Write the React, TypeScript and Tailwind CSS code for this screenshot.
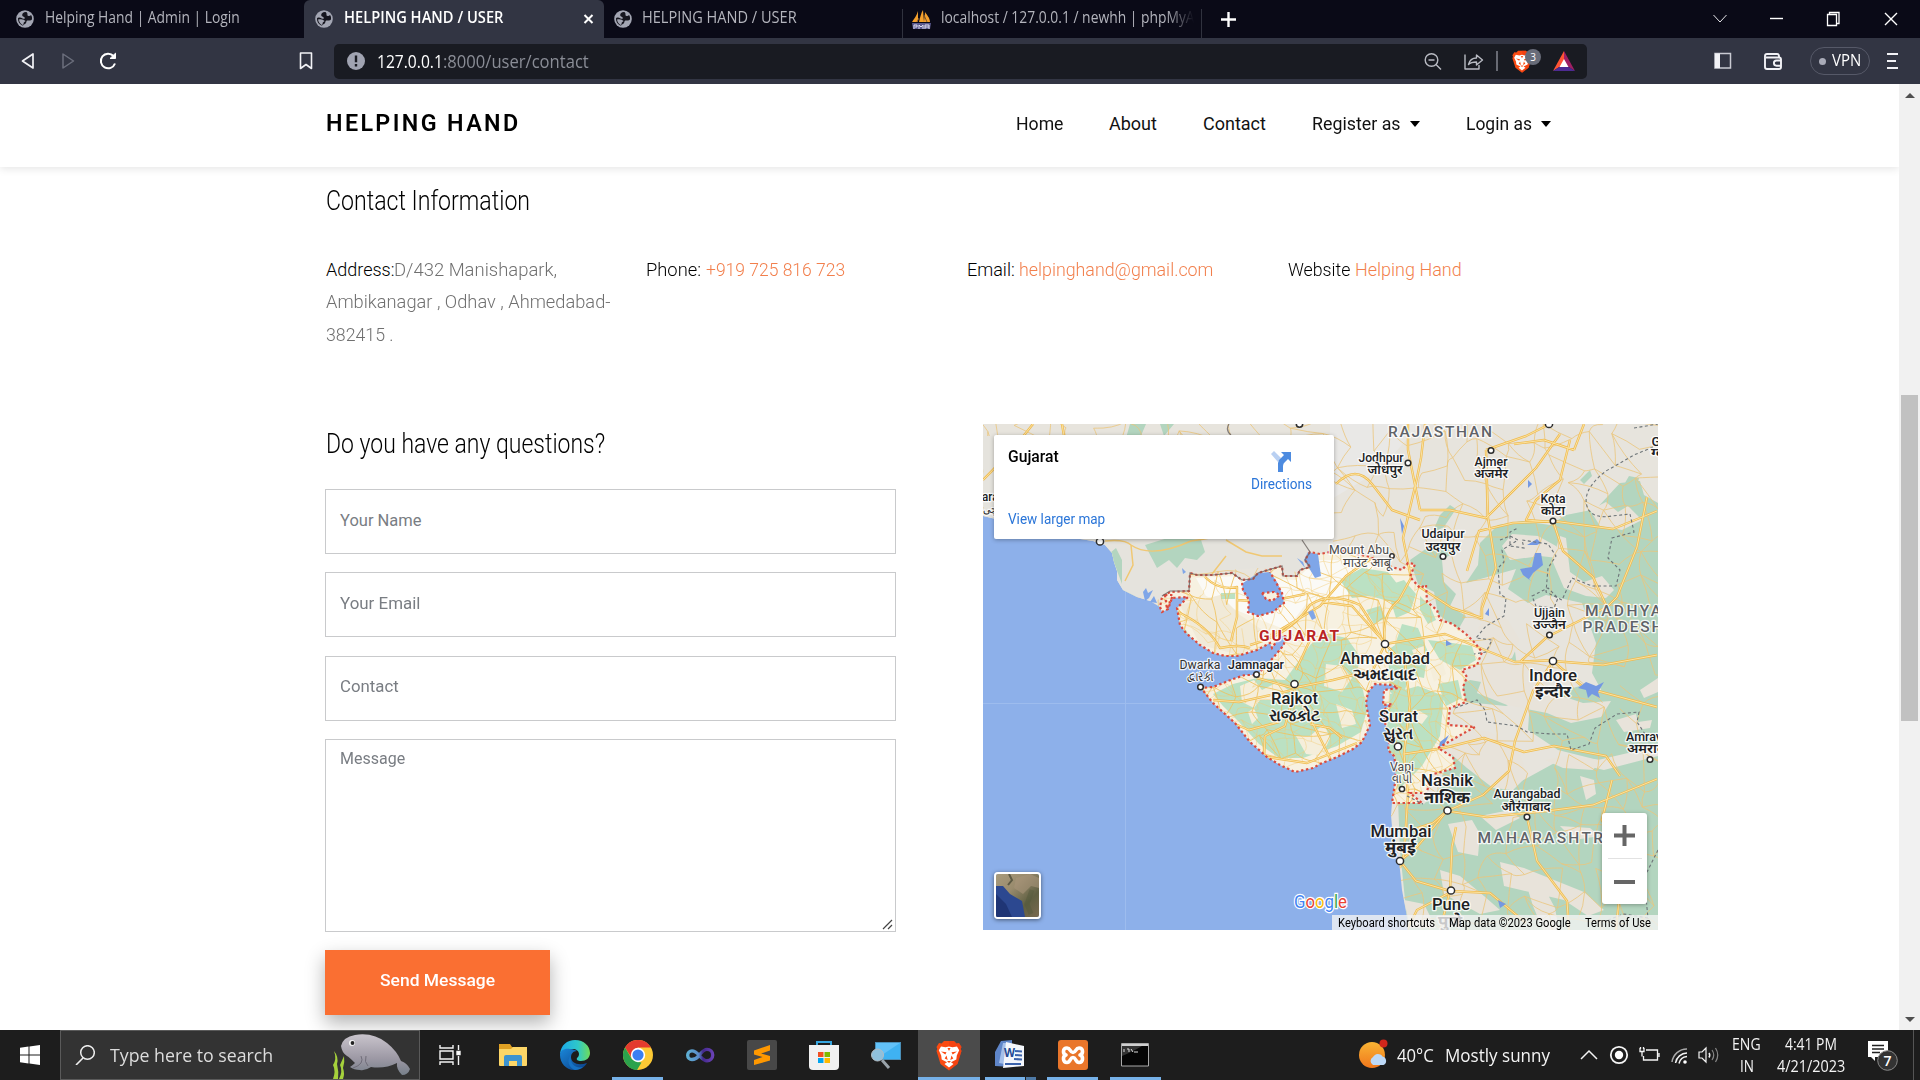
import React, { useLayoutEffect, useRef, useState } from 'react';

/* A run of text that is stretched or condensed to a given width. */
function Fit({ w, className = '', children }: { w: number; className?: string; children: React.ReactNode }) {
  const ref = useRef<HTMLSpanElement>(null);
  const [k, setK] = useState(1);
  useLayoutEffect(() => {
    if (ref.current && ref.current.offsetWidth) setK(w / ref.current.offsetWidth);
  }, [w]);
  return (
    <span className={`inline-block shrink-0 whitespace-nowrap ${className}`} style={{ width: w }}>
      <span ref={ref} className="inline-block origin-left" style={{ transform: `scaleX(${k})` }}>
        {children}
      </span>
    </span>
  );
}

const Globe = () => (
  <svg width="18" height="18" viewBox="0 0 18 18" className="shrink-0">
    <circle cx="9" cy="9" r="8.8" fill="#a3a6b3" />
    <path d="M10.5 2C8 1.600 6 3.400 6.200 5.200 6.400 7 9 6.400 8.800 8.200c-.2 1.400-2.400.2-3.800-.4C4 7.400 2.600 7 2 8.200c-.2 3 1.400 5.800 3.800 7 1.800.8 2-.8 3.400-1.400 1.800-.6.6-2.600 2.200-3.200 1.600-.6 3.200.4 4.400-.8.6-1.600.2-3.400-.8-4.800-.8.8-1.600 1.400-3 .8-1.200-.6.4-2-1.500-3.800z" fill="#16161f" />
    <path d="M3 9.500c3-.8 5.400.2 6.600 1.600l-1.800 1.300-.6 2.800C5 14.500 3.200 12 3 9.500z" fill="#a3a6b3" />
  </svg>
);

function BraveLion({ w, h }: { w: number; h: number }) {
  return (
    <svg width={w} height={h} viewBox="0 0 26 31" preserveAspectRatio="none" className="shrink-0">
      <path d="M8 1h10l2.500 2.500L23 3l2.500 4-.8 2 .8 2-4 13-8.500 6.500L4.500 24l-4-13 .8-2-.8-2L3 3l2.500.5z" fill="#fb4b12" />
      <path d="M13 1h5l2.500 2.500L23 3l2.500 4-.8 2 .8 2-4 13-8.500 6.500z" fill="#f03a10" opacity=".5" />
      <path d="M5 6.500l4.500.8L13 6.500l3.500.8L21 6.500l2.200 3.800-2.400 5.200-.5 4-5.300 2.700L17.500 24 13 27.500 8.500 24l2.500-1.800L5.700 19.500l-.5-4L2.800 10.300z" fill="#fff" />
      <path d="M5 11.500l5.500.8-1.200 2.200zM21 11.500l-5.500.8 1.200 2.200zM10.500 15.500l-1.800 3 3 1.600M15.500 15.500l1.800 3-3 1.600M11 21h4l-2 2zM11.500 8h3L13 11z" fill="#fb4b12" />
    </svg>
  );
}

function TabBar() {
  return (
    <div className="flex h-[38px] items-center bg-[#0a0a17] font-['Open_Sans',sans-serif] text-[15.5px] text-[#b4b5bd]">
      <div className="flex h-full w-[304px] items-center pl-4">
        <Globe />
        <Fit w={195} className="mt-[-2px] ml-[11px]">Helping Hand | Admin | Login</Fit>
      </div>
      <div className="flex h-full w-[300px] items-center rounded-t-md bg-[#323543] pl-[11px] text-white">
        <Globe />
        <Fit w={159} className="mt-[-2px] ml-[11px] font-semibold">HELPING HAND / USER</Fit>
        <svg width="11" height="10" viewBox="0 0 11 10" className="ml-[80px]">
          <path d="M1.500 1l8 8M9.500 1l-8 8" stroke="#fff" strokeWidth="2" />
        </svg>
      </div>
      <div className="flex h-full w-[298px] items-center pl-[10px]">
        <Globe />
        <Fit w={155} className="mt-[-2px] ml-[10px]">HELPING HAND / USER</Fit>
      </div>
      <div className="flex h-[29px] w-[300px] items-start self-end border-x border-[#30323e] pl-[8px]">
        <svg width="21" height="20" viewBox="0 0 21 20" className="mt-px shrink-0">
          <path d="M7 1C6 5 3 9 1 12h6zM12 0c-2 3-3 8-4 12h5zM14 2c0 3-1 7-1 10h6c0-4-3-7-5-10z" fill="#f4a02c" />
          <path d="M8 8l-2 4M13 5l3 7" stroke="#7d5730" />
          <path d="M1 13h19l-1 6H2z" fill="#5b5a8e" />
          <path d="M3 19v-4h3v2H4M8 19v-4l2 2 2-2v4M14 19v-4h4v4M14 17h4" stroke="#dcdcf0" fill="none" />
        </svg>
        <span className="mt-[-3px] ml-[9px] h-[26px] w-[253px] overflow-hidden [mask-image:linear-gradient(90deg,#000_225px,transparent_253px)]">
          <Fit w={254}>localhost / 127.0.0.1 / newhh | phpMyA</Fit>
        </span>
      </div>
      <svg width="15" height="15" viewBox="0 0 15 15" className="ml-[19px]">
        <path d="M7.500 0v15M0 7.500h15" stroke="#fff" strokeWidth="2.400" />
      </svg>
      <svg width="190" height="20" viewBox="0 0 190 20" className="mr-[21px] ml-auto" fill="none" stroke="#e8e8ec">
        <path d="M4.500 6l6.500 7 6.500-7" />
        <path d="M61 9.500h13" stroke="#fff" strokeWidth="1.400" />
        <path d="M118.500 5.500h9v11h-9zM120.500 5v-1.500h9.500v11h-2" stroke="#fff" strokeWidth="1.300" />
        <path d="M176 4l12 12M188 4l-12 12" stroke="#fff" strokeWidth="1.400" />
      </svg>
    </div>
  );
}

function Toolbar() {
  return (
    <div className="flex h-[46px] items-center bg-[#323543] font-['Open_Sans',sans-serif]">
      <svg width="100" height="20" viewBox="20 0 100 20" className="ml-[20px] -mt-px" fill="none">
        <path d="M33 3v14L22.500 10z" stroke="#f2f2f6" strokeWidth="1.700" strokeLinejoin="round" />
        <path d="M63 3v14l10.500-7z" stroke="#6c6f7d" strokeWidth="1.500" strokeLinejoin="round" />
        <path d="M113.500 5A7.300 7.300 0 1 0 115 12.500" stroke="#fff" strokeWidth="2" />
        <path d="M110 7.500h5.500V2.200z" fill="#fff" stroke="#fff" strokeLinejoin="round" />
      </svg>
      <svg width="14" height="18" viewBox="0 0 14 18" className="ml-[179px] -mt-px">
        <path d="M1.500 1h11v15.500L7 12.500l-5.500 4z" fill="none" stroke="#f2f2f6" strokeWidth="1.600" strokeLinejoin="round" />
      </svg>
      <div className="ml-[21px] flex h-[35px] w-[1253px] items-center rounded-[5px] bg-[#191b22] pl-[13px] text-[17.5px]">
        <svg width="18" height="18" viewBox="0 0 18 18">
          <circle cx="9" cy="9" r="9" fill="#a0a3b1" />
          <path d="M9 3.500v6.800M9 12v2.500" stroke="#191b22" strokeWidth="2.400" />
        </svg>
        <Fit w={66} className="ml-[12px] text-white">127.0.0.1</Fit>
        <Fit w={146} className="text-[#8a8d96]">:8000/user/contact</Fit>
        <svg width="76" height="24" viewBox="0 0 76 24" className="ml-auto" fill="none" stroke="#b9bbc3" strokeWidth="1.400">
          <circle cx="7.500" cy="11" r="6.300" />
          <path d="M12 15.500l5 5M4.500 11h6" />
          <path d="M41 11.500v-6M41 8v12h14v-4M44.500 15.500c1-4 4-6.500 8-6.500V6l6 5-6 5v-3c-3.500 0-6 .5-8 2.500z" strokeLinejoin="round" />
          <path d="M73 2v20" stroke="#8b8d97" />
        </svg>
        <span className="ml-[12px] flex w-[29px] items-center">
          <BraveLion w={20} h={23} />
          <span className="mb-[9px] -ml-[7px] h-[16px] w-[16px] shrink-0 rounded-full bg-[#686c79] text-center text-[10px] leading-[16px] text-white">3</span>
        </span>
        <svg width="22" height="20" viewBox="0 0 22 20" className="mr-[12px] ml-[12px]">
          <path d="M11 0L0 20l11-7z" fill="#ff5434" />
          <path d="M11 0l11 20-11-7z" fill="#9e1f63" />
          <path d="M0 20h22l-11-7z" fill="#4d2b93" />
          <path d="M11 8l4.500 8h-9z" fill="#fff" />
        </svg>
      </div>
      <svg width="70" height="20" viewBox="0 0 70 20" className="ml-[127px] -mt-px" fill="none">
        <rect x="1" y="2.500" width="15.500" height="14.500" stroke="#c9cad2" strokeWidth="1.500" />
        <path d="M1 2.500h5v14.500H1z" fill="#f2f2f6" />
        <path d="M65 7V5a2 2 0 0 0-2-2H53a2 2 0 0 0-2 2v11a2 2 0 0 0 2 2h12a2 2 0 0 0 2-2V8.500a2 2 0 0 0-2-2H52M67 9.500h-4.500a2.600 2.600 0 0 0 0 5.200H67" stroke="#f2f2f6" strokeWidth="1.900" />
      </svg>
      <div className="ml-[26px] flex h-[28px] w-[60px] items-center rounded-full border border-[#565968] pl-[8px] text-[16.5px] text-white">
        <span className="h-[7px] w-[7px] rounded-full bg-[#a9abb8]" />
        <Fit w={29} className="mt-[-1px] ml-[6px]">VPN</Fit>
      </div>
      <div className="ml-[17px] flex w-[11px] flex-col gap-[5px]">
        <span className="h-[2px] bg-[#f2f2f6]" />
        <span className="h-[2px] w-[9px] bg-[#f2f2f6]" />
        <span className="h-[2px] bg-[#f2f2f6]" />
      </div>
    </div>
  );
}

function SiteHeader() {
  return (
    <header className="flex h-[83px] items-center bg-white pb-[4px] pl-[326px] text-[18px] font-light text-black shadow-[0_2px_8px_rgba(0,0,0,0.1)]">
      <Fit w={195} className="mt-[-1px] text-[24.5px] font-semibold tracking-[2.5px]">HELPING HAND</Fit>
      <nav className="ml-[495px] flex items-center font-normal text-[#111]">
        <Fit w={47}>Home</Fit>
        <Fit w={48} className="ml-[46px]">About</Fit>
        <Fit w={63} className="ml-[46px]">Contact</Fit>
        <Fit w={89} className="ml-[46px]">Register as</Fit>
        <span className="ml-[9px] border-x-[5px] border-t-[6px] border-x-transparent border-t-black" />
        <Fit w={66} className="ml-[46px]">Login as</Fit>
        <span className="ml-[9px] border-x-[5px] border-t-[6px] border-x-transparent border-t-black" />
      </nav>
    </header>
  );
}

/* ---------- map ---------- */

const COAST_WEST =
  'M983 424V516L1080 539 1093 541 1105 545 1112 553 1114 562 1117 571 1117 580 1123 590 1137 597 1150 601 1160 607';
const GUJ_COAST =
  'L1162 612 1168 609 1172 598 1188 597 1177 608 1180 625 1186 633 1200 645 1213 653 1225 656 1237 656 1257 650 1270 643 1272 648 1280 636 1287 636 1283 646 1273 658 1257 675 1245 675 1233 679 1213 687 1201 688 1213 703 1235 723 1250 742 1267 757 1280 765 1295 772 1313 768 1320 764 1337 757 1353 749 1362 742 1370 725 1366 703 1368 692 1375 684 1392 685 1398 688 1384 690 1383 705 1392 704 1385 709 1385 723 1390 737 1388 750 1394 756 1396 767 1395 783 1392 803';
const LAND = `${COAST_WEST}${GUJ_COAST} 1391 815 1392 827 1399 860 1402 890 1407 917 1408 930H1658V424Z`;
const GUJ_BORDER =
  'L1422 803 1410 793 1427 793 1430 775 1455 768 1453 757 1438 748 1457 737 1475 727 1448 725 1450 708 1466 702 1463 687 1467 677 1462 670 1477 665 1482 652 1475 643 1467 635 1453 624 1440 620 1437 610 1427 602 1426 585 1420 588 1410 577 1415 564 1408 563 1402 570 1392 567 1370 557 1345 551 1330 552 1320 554 1310 552 1305 560 1310 567 1300 570 1297 576 1283 576 1282 566 1258 573 1253 579 1242 580 1232 573 1213 575 1197 575 1190 573 1189 591 1170 592 1162 597Z';
const GUJ = `M1160 607${GUJ_COAST}${GUJ_BORDER}`;

const OUTER_GREEN = [
  'M1110 553l8-5 8 12-6 22-3-12zM1123 590l8 2 6 5-6 1zM1145 545l20-10 40 2 6 18-14 8-12-6-12 10-14-3z',
  'M1130 424h16l-6 14h-14zM1160 424h14l-10 12z',
  'M1410 560l20-14 18-4 10 8-16 10 2 22 12 12-6 12 16 10-8 14-20-16-4-22-16-8z',
  'M1440 515l10-10 6 4-12 18-12 6z',
  'M1466 583l12-18 2-22 18-18 24-4 28 4 16-10 30-6 24-26 20-2 4 14 14 8 30-4 10 14v180h-44l-30 8-20-6-12-22 4-30-14-40-36-8-18 8-20-14 8-20z',
  'M1615 500l14-24 10 2-6 30-10 8zM1580 480l10-10 2 6-8 8z',
  'M1398 800l26 4 20-20 26-8 16 14 30-6 44-24 44 10 54-14v174h-250l-8-80z',
  'M1450 690l20-10 34 6 20 12-18 8-40-4zM1460 740l20 20 26 36-20 8-30-10-14-18z',
  'M1530 700l50-14 30 6 48-16v70l-60 14-40-10-30-20z',
  'M1500 640l14 4 4 30-14 10-12-12z',
];
const BEIGE = [
  'M1487 665l14-14 18 14 20 4 14 24 30 10 28-2-10 16-30 6-24-10-40-8-30-12z',
  'M1455 740l10-12 26 4 30 24 6 20-14 14-20-2-26-20-16-14z',
  'M1478 628l14-18 16 10 12 20-8 18-20-2z',
  'M1502 546l10-12 26 2 18 10 2 12-18-2-30 4z',
  'M1552 560l8-24 6 2 4 34 14 10 18-6 12 14-8 8-20-2-22-8z',
  'M1590 510l16-8 12 10 10-6 14 14-20 10-22-4z',
  'M1448 824l24-4 8 14-2 22-20-4zM1440 870l20 6 24 20 16 14-20 4-36-20z',
  'M1500 862l24 6 60 24 20 18-16 6-24-16-60-14zM1480 816l30-6 10 8-24 12z',
  'M1545 760l20-4 36 4-8 10-30-2zM1580 776l14 4 2 14-10 6zM1560 826l30 2 10 8-26 4z',
  'M1525 880l14-2 16 30 4 22h-16l-10-24zM1616 720l20-6 2 8 14-2-2 8-26 4z',
  'M1640 690l18-12v14l-14 6zM1404 900l20 4 12 24h-26z',
];
const GUJ_GREEN = [
  'M1213 694l20-10 24-6 28 2 26-36 16-10 20 4 14 20-6 18 8 14 4 20-6 22-24 14-34 12-24 0-20-14-20-22-16-16z',
  'M1340 580l22-12 26 4 14 18-10 12-22-6-18 2zM1386 586l18-6 12 14-6 18-14 6z',
  'M1402 624l16 4 10 24-4 26-20-4-10-26zM1388 650l14-10 6 40-6 20-12-8z',
  'M1390 694l28-8 26 10-4 40-18 30-24 24-12-50z',
  'M1428 640l18 2 26 4 4 14-16 10-20-10zM1221 593h14v6h-14zM1180 628l6 2 6 12-4 2z',
  'M1350 540l18 4-6 10zM1438 684l20-4 4 18-16 8z',
  'M1420 596l10 10 6 14-8 4-8-14zM1366 610l14-4 6 12-12 6z',
];
const GUJ_BEIGE = [
  'M1296 736l14 0 14-12 6 14-8 18-16-2zM1248 712l6-4 4 10-6 6zM1240 686l14-6 8 10 16-8 10 8-8 10-20 0-6 8-12-6z',
  'M1430 668l12-8 4 14-12 8zM1326 664l16 2 10 12-10 14-18-6zM1336 704l16 6 4 14-14 4zM1404 716l14-6 10 6-6 8zM1412 650l12-4 2 10-10 4z',
];

const MAIN_ROADS = [
  'M983 480q30-30 50-56M1062 424l2 12',
  'M1205 577q14 14 32 10v30l-6 24M1237 600l30 2 38-8M1178 612q30 14 42 36 20-4 30 0',
  'M1250 645q40-10 60-40 20-14 50 0l25 39M1270 636l50-30 26-30 26-18',
  'M1385 644q-4-30 14-44l12-22-8-40 14-60 4-20 6-50M1420 510l-12-60 0-26M1420 510l30 0 36 8 50-50 24-34',
  'M1336 484q20-20 36 0l20 26 28 10M1486 450l2 68 8 50-14 40 0 10-30-10-34-22M1486 450l40-14 24-12M1574 450l-30-10-30 4M1574 450l10-26M1553 521l-40 2-34 8-12 40',
  'M1553 521l60 8 44-18M1553 521l10 30 30 26 14 30 10-10 20-50 10-50M1607 607l-60 30-26 24M1570 440l-10 40-24 20-10 20 26 2',
  'M1385 644l60-10 40 16 30 12 40-2M1385 644l-12 26-40 10-40 8-36-10M1295 690l-10 36-20 10-1 24M1385 644l20 20 5 40-6 50 4 40-4 60-4 14',
  'M1213 700l26 2 54-12M1201 688l20 30 28 12 30-8M1310 724l20 4 12 10M1267 757l40 6 50-20',
  'M1553 661l-20 30-18 50-6 30-26 24-36 16-14 12-24 8M1447 811l-30 36-17 14M1447 811l40 6 60-6 46-6 64-26',
  'M1400 861l16 20 34 10M1450 891l2-44 4-20M1450 891l40 2 36 30M1527 817l10 44 30 40 2 29M1404 754l40-6 40-10 40 14 30-6 52 10 14 20M1553 661l50 4 54-10M1553 661l30 26 74 20',
  'M1407 930l10-20 34-18M1612 780l-10 40 20 50-6 60M1450 891l-10 39M1310 640l-14 30M1322 602l30 4 34 38M1332 762l-20-40-18-32',
];

/* Seeded pseudo-random numbers, for the fine web of minor roads. */
function rng(seed: number) {
  let s = seed;
  return () => {
    s = (s * 16807) % 2147483647;
    return s / 2147483647;
  };
}
function minorRoads(seed: number, step: number) {
  const r = rng(seed);
  const cols = Math.ceil(700 / step) + 1;
  const rows = Math.ceil(520 / step) + 1;
  const p: [number, number][][] = [];
  for (let j = 0; j < rows; j++) {
    p.push([]);
    for (let i = 0; i < cols; i++) p[j].push([978 + i * step + (r() - 0.5) * step * 0.9, 418 + j * step + (r() - 0.5) * step * 0.9]);
  }
  let d = '';
  const seg = (a: [number, number], b: [number, number]) => {
    const mx = (a[0] + b[0]) / 2 + (r() - 0.5) * 9;
    const my = (a[1] + b[1]) / 2 + (r() - 0.5) * 9;
    d += `M${a[0].toFixed(1)} ${a[1].toFixed(1)}Q${mx.toFixed(1)} ${my.toFixed(1)} ${b[0].toFixed(1)} ${b[1].toFixed(1)}`;
  };
  for (let j = 0; j < rows - 1; j++)
    for (let i = 0; i < cols - 1; i++) {
      if (r() < 0.72) seg(p[j][i], p[j][i + 1]);
      if (r() < 0.72) seg(p[j][i], p[j + 1][i]);
      if (r() < 0.3) seg(p[j][i], p[j + 1][i + 1]);
    }
  return d;
}
const MINOR = minorRoads(77, 23);
const MINOR_FINE = minorRoads(4111, 14);

type Label = { t: string; x: number; y: number; s: number; w: number; c?: string; b?: number };
const LABELS: Label[] = [
  { t: 'Jodhpur', x: 1381, y: 462, s: 12.5, w: 45, b: 500 },
  { t: 'जोधपुर', x: 1385, y: 474, s: 12.5, w: 35, b: 600 },
  { t: 'Ajmer', x: 1491, y: 466, s: 12.5, w: 33, b: 500 },
  { t: 'अजमेर', x: 1491, y: 478, s: 12.5, w: 34, b: 600 },
  { t: 'Kota', x: 1553, y: 502.5, s: 12.5, w: 25, b: 500 },
  { t: 'कोटा', x: 1553, y: 515, s: 12.5, w: 24, b: 600 },
  { t: 'Udaipur', x: 1443, y: 538, s: 12.5, w: 43, b: 500 },
  { t: 'उदयपुर', x: 1443, y: 550.5, s: 12.5, w: 35, b: 600 },
  { t: 'Mount Abu', x: 1359, y: 554, s: 12.5, w: 60, b: 400, c: '#4a4a4a' },
  { t: 'माउंट आबू', x: 1367, y: 566.5, s: 12.5, w: 48, b: 400, c: '#4a4a4a' },
  { t: 'Ujjain', x: 1549.5, y: 616.5, s: 12.5, w: 31, b: 500 },
  { t: 'उज्जैन', x: 1549.5, y: 628.5, s: 12.5, w: 33, b: 600 },
  { t: 'Ahmedabad', x: 1385, y: 663.5, s: 16, w: 90, b: 500 },
  { t: 'અમદાવાદ', x: 1385, y: 680, s: 15.5, w: 64, b: 700 },
  { t: 'Indore', x: 1553, y: 680.5, s: 16, w: 48, b: 500 },
  { t: 'इन्दौर', x: 1553, y: 697, s: 15.5, w: 36, b: 700 },
  { t: 'Dwarka', x: 1200, y: 668.5, s: 12.5, w: 41, b: 400, c: '#333' },
  { t: 'દ્વારકા', x: 1200, y: 681, s: 12.5, w: 26, b: 400, c: '#333' },
  { t: 'Jamnagar', x: 1256, y: 668.5, s: 12.5, w: 56, b: 500 },
  { t: 'Rajkot', x: 1294.5, y: 703.5, s: 16, w: 47, b: 500 },
  { t: 'રાજકોટ', x: 1294, y: 720.5, s: 15.5, w: 51, b: 700 },
  { t: 'Surat', x: 1398.5, y: 722, s: 16, w: 39, b: 500 },
  { t: 'સુરત', x: 1398, y: 738.5, s: 15.5, w: 31, b: 700 },
  { t: 'Vapi', x: 1402, y: 771, s: 12.5, w: 24, b: 400, c: '#4a4a4a' },
  { t: 'વાપી', x: 1402, y: 783, s: 12.5, w: 20, b: 400, c: '#4a4a4a' },
  { t: 'Nashik', x: 1447, y: 786, s: 16, w: 52, b: 500 },
  { t: 'नाशिक', x: 1447, y: 802.5, s: 15.5, w: 46, b: 700 },
  { t: 'Mumbai', x: 1401, y: 836.5, s: 16, w: 61, b: 500 },
  { t: 'मुंबई', x: 1400.5, y: 853, s: 15.5, w: 31, b: 700 },
  { t: 'Aurangabad', x: 1527, y: 798, s: 12.5, w: 67, b: 500 },
  { t: 'औरंगाबाद', x: 1526, y: 811, s: 12.5, w: 49, b: 600 },
  { t: 'Amrav', x: 1644, y: 741, s: 12.5, w: 36, b: 500 },
  { t: 'अमराव', x: 1646, y: 753, s: 12.5, w: 38, b: 600 },
  { t: 'Pune', x: 1451, y: 910, s: 16, w: 38, b: 500 },
  { t: 'पुणे', x: 1450, y: 927, s: 15.5, w: 24, b: 700 },
  { t: 'G', x: 1656, y: 445.5, s: 12.5, w: 9, b: 500 },
  { t: 'ग्व', x: 1658, y: 457, s: 12.5, w: 14, b: 600 },
  { t: 'arachi', x: 998, y: 501, s: 12.5, w: 32, b: 500 },
  { t: 'کراچی', x: 996, y: 513, s: 12, w: 26, b: 500 },
  { t: 'RAJASTHAN', x: 1440, y: 436.5, s: 15.5, w: 104, c: '#5f6368', b: 500 },
  { t: 'MADHYA', x: 1623, y: 616, s: 15.5, w: 76, c: '#5f6368', b: 500 },
  { t: 'PRADESH', x: 1622.5, y: 632, s: 15.5, w: 80, c: '#5f6368', b: 500 },
  { t: 'MAHARASHTRA', x: 1546.5, y: 842.5, s: 15.5, w: 138, c: '#5f6368', b: 500 },
  { t: 'GUJARAT', x: 1299, y: 640.5, s: 15.5, w: 80, c: '#b92424', b: 700 },
];
const DOTS: [number, number, number][] = [
  [1408, 463, 2.8], [1491, 450.5, 2.8], [1553, 521, 2.8], [1443, 556.5, 2.8], [1392, 556, 2.2], [1549.5, 635, 2.8],
  [1385, 644, 3.6], [1553, 661, 3.6], [1256.5, 674.5, 2.8], [1200.5, 687, 2.8], [1294.5, 684, 3.6], [1398, 746.5, 3.6],
  [1402, 789, 2.6], [1447.5, 810.5, 3.6], [1400, 861, 3.6], [1527, 817, 2.8], [1650, 759.5, 2.8], [1451, 890.5, 3.6],
  [1100, 541.5, 3.6], [1299.5, 424, 3.2], [1549, 424, 3.6],
];

function MapCanvas() {
  return (
    <svg width="675" height="506" viewBox="983 424 675 506" className="block font-[Roboto,'Noto_Sans',sans-serif]">
      <defs>
        <clipPath id="land"><path d={LAND} /></clipPath>
        <clipPath id="guj"><path d={GUJ} /></clipPath>
      </defs>
      <path d="M983 424h675v506H983z" fill="#8db0ea" />
      <path d="M1125.500 539v391M983 703.500h230" stroke="#9dbcee" />
      <path d={LAND} fill="#e7e4dd" />
      <g clipPath="url(#land)">
        <path d="M1330 500l50-30 40-46h-90z" fill="#e9e8e6" />
        <path d={OUTER_GREEN.join('')} fill="#b3d5bf" />
        <path d={BEIGE.join('')} fill="#e8e3da" />
        <path d={MINOR} fill="none" stroke="#ebc67c" strokeWidth="1" opacity=".8" />
        <path d="M983 436h350v128l-35 8-40-4-64 4-8 22-40 8-60-20-12-34-90-10z" fill="#e5e3dd" />
        <path d="M1145 545l26-8 30 3 4 12-8 8-12-2-8 10-8-8-12 8zM1172 548l12-4 8 10-16 6zM1110 553l6-5 6 12 0 24-6-16z" fill="#b3d5bf" />
        <path d="M1105 541q20-2 26 4 20 14 60-4 30-4 52-12M1131 545l2 20-8 16M1226 540l20 12 16 4 20 0M1226 556l-14 18" fill="none" stroke="#f0c873" strokeWidth="1.500" />
        <g clipPath="url(#guj)">
          <path d={GUJ} fill="#f7f1e1" />
          <path d="M1196 578l40-2 60 4 20-20 60 0-10 30-60 14-20 26-50-20-30-14z" fill="#fbfaf6" />
          <path d="M1180 605l40-10 20 20 30 20-30 20-40-10z" fill="#f1ead8" />
          <path d={GUJ_GREEN.join('')} fill="#bbe1c3" />
          <path d={GUJ_BEIGE.join('')} fill="#f5eedb" />
          <path d={MINOR} fill="none" stroke="#f0c25e" strokeWidth="1" opacity=".85" />
          <path d="M1290 600h200v210h-120l-20-60-60 30-90-90 100-20z" fill="none" />
          <path d={MINOR_FINE} fill="none" stroke="#f4cd74" strokeWidth=".9" opacity=".5" />
        </g>
        <path d={MAIN_ROADS.join('')} fill="none" stroke="#efbb52" strokeWidth="2.400" strokeLinejoin="round" />
        <path d={MAIN_ROADS.join('')} fill="none" stroke="#fbe3a0" strokeWidth="1" strokeLinejoin="round" />
      </g>
      <path d="M1243 583l15-10 12-1 7 10 5 11 2 10-11 9-15 4-10-4 1-12-7-10z" fill="#7fa6e8" />
      <path d="M1262 593l12-1 6 3-8 6-6-2z" fill="#f7f1e1" />
      <path d="M1308 552l10 2 3 22-6 2-6-10-5-8zM1143 592l3-4 2 5 5-3-4 8-4 3zM1150 602l4-6 3 7zM1297 558l6 4 2 6zM1308 612l5-2 3 8-4 2zM1182 568l4 4-3 2z" fill="#7fa6e8" />
      <path d="M1537 545l-10 0 10-6 4 4zM1535 553l6 0 2 12-10 8-4 6 2 2-8-6-3-6 12-2zM1586 682l10 4 8-4-6 10 2 6-8-4-4 4-2-8-8-2zM1440 742l9-7-5 10-5 2zM1485 614l4-6v8zM1528 480l4 4-4 4zM1446 640l6 4-6 2zM1400 518l4 8-2 8zM1498 900l8 4-6 4z" fill="#7498e2" />
      <path d={GUJ} fill="none" stroke="#dc4b3e" strokeWidth="2.200" strokeDasharray="2.400 2.600" />
      <path d="M1242 583l1 7 6 10-1 12 10 4 15-4 11-9-2-10-12-21M1262 593l12-1 6 3-8 6-6-2-4-6M1165 595l8 0-6 14z" fill="none" stroke="#dc4b3e" strokeWidth="2.200" strokeDasharray="2.400 2.600" />
      <path d="M1162 596l8-5 19 0 1-18 7 2 16 0 19-2 10 7 11-1 5-6 24-7 1 10 14 0 3-6 10-3-5-7 5-8-8-12M1229 424q-4 6 2 11" fill="none" stroke="#6b6460" strokeWidth="1.200" opacity=".8" />
      <path d="M1658 445l-24 10-28 16q-26 20-18 38 6 10 24 7l18-2 4 18-22 6-4 20 12 12-4 16-24 0-20-8-10 22-16-8 2-24 8-12-8-12-26-4 2 8-14-2 0-14 8-4M1500 540l10-4 8 4-16 10 2 12-6 6 2 26 6 4-2 18-18 10-10 12 16 2-6 12-12 2M1532 596l16-8 10 10-4 10-18-2zM1455 708l22-8 8 10 2 12 30 4 10 6 24 2 16 0 4 16 18-6 6-16 22-14 22-2-2 10 8 12M1634 428l24-4M1658 850l-14 28 4 40-24-4-16 6M1407 796l16 8" fill="none" stroke="#6d7478" strokeWidth="1.100" strokeDasharray="3 2.500" />
      {DOTS.map(([x, y, r], i) => (
        <circle key={i} cx={x} cy={y} r={r} fill="#fff" stroke="#2d2d2d" strokeWidth="1.500" />
      ))}
      {LABELS.map((l, i) => (
        <text key={i} x={l.x} y={l.y} fontSize={l.s} fontWeight={l.b} fill={l.c || '#202124'} textAnchor="middle"
          textLength={l.w} lengthAdjust={l.c && l.s > 15 ? 'spacing' : 'spacingAndGlyphs'}
          stroke="#fff" strokeOpacity=".85" strokeWidth="2.600" strokeLinejoin="round" paintOrder="stroke">
          {l.t}
        </text>
      ))}
      <text x="1294" y="908" fontSize="19" fontWeight="400" textLength="53" lengthAdjust="spacingAndGlyphs" stroke="#fff" strokeWidth="2.500" paintOrder="stroke">
        <tspan fill="#4285f4">G</tspan><tspan fill="#ea4335">o</tspan><tspan fill="#fbbc05">o</tspan><tspan fill="#4285f4">g</tspan><tspan fill="#34a853">l</tspan><tspan fill="#ea4335">e</tspan>
      </text>
    </svg>
  );
}

function MapPanel() {
  return (
    <div className="relative h-[506px] w-[675px] overflow-hidden font-[Roboto,sans-serif]">
      <MapCanvas />
      <div className="absolute top-[11px] left-[11px] flex h-[104px] w-[340px] justify-between rounded-[2px] bg-white pt-[12px] pr-[22px] pl-[14px] shadow-[0_1px_4px_rgba(0,0,0,0.3)]">
        <div className="flex flex-col">
          <Fit w={51} className="text-[16px] leading-[20px] font-medium text-black">Gujarat</Fit>
          <Fit w={97} className="mt-[43px] text-[14.5px] leading-[20px] text-[#2a75d8]">View larger map</Fit>
        </div>
        <div className="flex flex-col items-center">
          <svg width="22" height="22" viewBox="0 0 22 22" className="mt-[3px] mr-[2px]">
            <path d="M1 4l3-3 7 7-3 4z" fill="#b9d0f2" />
            <path d="M8 22V13q0-3 3-5l3-3-3-3h10v10l-3-3-3 3q-2 1.500-2 4v6z" fill="#4d8be0" />
          </svg>
          <Fit w={61} className="mt-[3px] text-[14.5px] leading-[20px] text-[#2a75d8]">Directions</Fit>
        </div>
      </div>
      <div className="absolute bottom-[11px] left-[11px] h-[47px] w-[47px] overflow-hidden rounded-[4px] border-2 border-white shadow-[0_1px_4px_rgba(0,0,0,0.5)]">
        <svg width="43" height="43" viewBox="0 0 43 43">
          <defs>
            <linearGradient id="terrain" x2="1" y2="1"><stop stopColor="#a89b7c" /><stop offset=".35" stopColor="#9a8c6e" /><stop offset=".7" stopColor="#5f5f42" /><stop offset="1" stopColor="#7a6a50" /></linearGradient>
          </defs>
          <path d="M0 0h43v43H0z" fill="url(#terrain)" />
          <path d="M20 4l14-4 9 4v10l-8-2-8 8-9-6z" fill="#a8957a" opacity=".6" />
          <path d="M13 0l3 6-4 5" stroke="#5d5a44" strokeWidth="2" fill="none" />
          <path d="M0 12h7l7 8 12 7 3 16H0z" fill="#2c4890" />
          <path d="M0 20l10 10 6 13H0z" fill="#1f3575" />
          <path d="M36 16l-5 14 4 10" stroke="#50583a" strokeWidth="5" fill="none" opacity=".4" />
        </svg>
      </div>
      <div className="absolute right-[11px] bottom-[26px] flex h-[91px] w-[45px] flex-col items-center rounded-[3px] bg-white shadow-[0_1px_4px_rgba(0,0,0,0.3)]">
        <svg width="21" height="21" viewBox="0 0 21 21" className="mt-[12px]"><path d="M10.500 0v21M0 10.500h21" stroke="#666" strokeWidth="4" /></svg>
        <span className="mt-[12px] h-px w-[34px] bg-[#e2e2e2]" />
        <span className="mt-[21px] h-[4px] w-[21px] bg-[#666]" />
      </div>
      <div className="absolute right-0 bottom-0 flex h-[15px] w-[326px] items-center bg-[#f2f2f2]/80 pt-px pl-[6px] text-[12px] leading-[14px] text-black">
        <Fit w={97}>Keyboard shortcuts</Fit>
        <Fit w={122} className="ml-[14px]">Map data ©2023 Google</Fit>
        <Fit w={66} className="ml-[14px]">Terms of Use</Fit>
      </div>
    </div>
  );
}

function Field({ label, w }: { label: string; w: number }) {
  return (
    <div className="flex h-[65px] items-center border border-[#c9cacc] px-[14px] pb-px text-[16.5px] text-[#797d83]">
      <Fit w={w}>{label}</Fit>
    </div>
  );
}

function ContactPage() {
  return (
    <div className="flex h-[946px] bg-white">
      <main className="w-[1899px] overflow-hidden font-[Roboto,sans-serif]">
        <SiteHeader />
        <div className="pl-[326px] text-black">
          <h2 className="mt-[17px] h-[34px] text-[28px] leading-[34px] font-light">
            <Fit w={204}>Contact Information</Fit>
          </h2>
          <div className="mt-[36px] flex h-[97px] text-[18px] leading-[32.4px] font-light">
            <div className="flex w-[320px] flex-col text-[#707070]">
              <span className="flex"><Fit w={68} className="text-black">Address:</Fit><Fit w={163}>D/432 Manishapark,</Fit></span>
              <Fit w={285}>Ambikanagar , Odhav , Ahmedabad-</Fit>
              <Fit w={68}>382415 .</Fit>
            </div>
            <div className="flex w-[321px]"><Fit w={55}>Phone:</Fit><Fit w={139} className="ml-[5px] text-[#f27f4c]">+919 725 816 723</Fit></div>
            <div className="flex w-[321px]"><Fit w={48}>Email:</Fit><Fit w={194} className="ml-[4px] text-[#f27f4c]">helpinghand@gmail.com</Fit></div>
            <div className="flex"><Fit w={62}>Website</Fit><Fit w={107} className="ml-[5px] text-[#f27f4c]">Helping Hand</Fit></div>
          </div>
          <div className="mt-[73px] flex">
            <section className="-ml-px w-[571px] pt-[3px]">
              <h2 className="h-[34px] pl-px text-[28px] leading-[34px] font-light"><Fit w={279}>Do you have any questions?</Fit></h2>
              <div className="mt-[28px] flex flex-col">
                <div className="flex flex-col gap-[18.4px]">
                  <Field label="Your Name" w={82} />
                  <Field label="Your Email" w={80} />
                  <Field label="Contact" w={59} />
                  <div className="flex h-[193px] flex-col border border-[#c9cacc] pt-[7px] pr-[2px] pl-[14px] text-[16.5px] text-[#797d83]">
                    <Fit w={65}>Message</Fit>
                    <svg width="11" height="11" viewBox="0 0 11 11" className="mt-auto mb-[1px] self-end">
                      <path d="M1 10l9-9M6 10l4-4" stroke="#444" strokeWidth="1.200" />
                    </svg>
                  </div>
                </div>
                <div className="mt-[17.5px] flex h-[65px] w-[225px] items-center justify-center bg-[#fa6f32] pb-[2px] text-[17px] font-medium text-white shadow-[0_8px_18px_rgba(0,0,0,0.3)]">
                  <Fit w={115}>Send Message</Fit>
                </div>
              </div>
            </section>
            <div className="ml-[87px]"><MapPanel /></div>
          </div>
        </div>
      </main>
      <div className="flex w-[21px] flex-col items-center bg-[#f1f1f1] pt-[9px] pb-[8px]">
        <span className="border-x-[5px] border-b-[5px] border-x-transparent border-b-[#505050]" />
        <span className="mt-[297px] h-[326px] w-[17px] bg-[#c1c1c1]" />
        <span className="mt-auto border-x-[5px] border-t-[5px] border-x-transparent border-t-[#505050]" />
      </div>
    </div>
  );
}

/* ---------- taskbar ---------- */

const Manatee = () => (
  <svg width="82" height="48" viewBox="330 1031 82 48" className="shrink-0">
    <defs>
      <linearGradient id="skin" x2="0" y2="1"><stop stopColor="#c9c4cc" /><stop offset=".6" stopColor="#9c98a4" /><stop offset="1" stopColor="#77808a" /></linearGradient>
    </defs>
    <path d="M341 1046q2-9 14-11 18-3 32 8 10 8 14 18 6 2 9 8-2 6-8 6-6-6-5-12-12 6-26 4-6 4-11 3-6 0-10-3 3-2 5-4-6-6-8-7-5-3-6-10z" fill="url(#skin)" />
    <path d="M361 1056q4 8-8 12M368 1066q-4-4-2-10" stroke="#6f6c78" fill="none" />
    <circle cx="352" cy="1043" r="3" fill="#f4f4f4" /><circle cx="352.500" cy="1043" r="1.900" fill="#222" />
    <path d="M333 1079q3-8 0-14 4-6 1-14 5 6 3 13 2 8 1 15zM339 1079q4-8 1-14l4-9q1 6-1 12 2 6 0 11z" fill="#a6d23c" />
  </svg>
);

function Slot({ active = false, running = false, children }: { active?: boolean; running?: boolean; children: React.ReactNode }) {
  return (
    <div className={`flex h-[50px] w-[62.2px] flex-col items-center ${active ? 'bg-[#4b4b4b]' : ''}`}>
      <div className="flex h-[47px] items-center justify-center pt-[3px]">{children}</div>
      {(active || running) && <span className={`h-[3px] bg-[#76b1e8] ${active ? 'w-full' : 'w-[51px]'}`} />}
    </div>
  );
}

function Taskbar() {
  return (
    <div className="flex h-[50px] items-center bg-[#1d1d1d] font-['Open_Sans',sans-serif] text-[#f4f4f4]">
      <svg width="20" height="20" viewBox="0 0 20 20" className="ml-[20px]">
        <path d="M0 2.800l8.500-1.200v8H0zM9.500 1.500L20 0v9.600H9.500zM0 10.500h8.500v8L0 17.300zM9.500 10.500H20V20L9.500 18.600z" fill="#fff" />
      </svg>
      <div className="ml-[20px] flex h-full w-[360px] items-center border border-[#5a5a5a] bg-[#333] pl-[14px] text-[18.5px] text-[#dcdcdc]">
        <svg width="20" height="20" viewBox="0 0 20 20"><path d="M8 13l-7 7" stroke="#eee" strokeWidth="1.600" /><circle cx="12.500" cy="7.500" r="6.800" fill="none" stroke="#eee" strokeWidth="1.500" /></svg>
        <Fit w={163} className="ml-[15px]">Type here to search</Fit>
        <span className="ml-[57px]"><Manatee /></span>
      </div>
      <div className="-ml-px flex">
        <Slot>
          <svg width="22" height="20" viewBox="0 0 22 20" fill="none" stroke="#f4f4f4" strokeWidth="1.400"><path d="M1 0v3h13V0M1 6h13v8H1zM1 20v-3h13v3M19.500 0v5M19.500 11v9" /><path d="M18 6.500h3v3h-3z" fill="#fff" /></svg>
        </Slot>
        <div className="w-px" />
        <Slot>
          <svg width="28" height="24" viewBox="0 0 28 24"><path d="M0 1h11l2 3h14v7H0z" fill="#dfa023" /><path d="M0 6h12l2-2h14v18a1 1 0 0 1-1 1H1a1 1 0 0 1-1-1z" fill="#fcd667" /><path d="M5 23v-9a2 2 0 0 1 2-2h14a2 2 0 0 1 2 2v9h-5v-5h-8v5z" fill="#3d93cf" /></svg>
        </Slot>
        <Slot>
          <svg width="30" height="30" viewBox="0 0 30 30">
            <defs><linearGradient id="edge" x2="1"><stop stopColor="#1aa7ea" /><stop offset=".6" stopColor="#2fc8c8" /><stop offset="1" stopColor="#6fdc59" /></linearGradient><linearGradient id="edge2" x2="1" y2="1"><stop stopColor="#1a86d8" /><stop offset="1" stopColor="#0b3f86" /></linearGradient></defs>
            <path d="M0 14C1 5 7 0 15 0c9 0 15 6 15 13 0 5-4 8-9 8-3 0-5-1-4-3 1-1 2-2 2-4 0-3-3-5-6-5-6 0-12 3-13 5z" fill="url(#edge)" />
            <path d="M0 15C0 10 5 8 10 9c3 0 5 1 7 2-4 0-6 3-6 6 0 6 7 9 16 6-3 5-8 7-13 7C6 30 0 23 0 15z" fill="url(#edge2)" />
            <path d="M11 15c-2 9 5 14 12 12-2 2-5 3-8 3C9 28 6 20 11 15z" fill="#1672c4" />
          </svg>
        </Slot>
        <Slot running>
          <svg width="30" height="30" viewBox="0 0 30 30"><circle cx="15" cy="15" r="15" fill="#fcc934" /><path d="M2 7.500A15 15 0 0 1 28 7.500H15L9 18.500z" fill="#e33b2e" /><path d="M2 7.500L8.800 19 15 22l3.500.5L14 30A15 15 0 0 1 2 7.500z" fill="#2ba24c" /><circle cx="15" cy="15" r="7.200" fill="#fff" /><circle cx="15" cy="15" r="5.600" fill="#3a7ff0" /></svg>
        </Slot>
        <Slot>
          <svg width="30" height="16" viewBox="0 0 30 16" fill="none" strokeWidth="3.400"><defs><linearGradient id="vs" gradientUnits="userSpaceOnUse" x1="0" y1="0" x2="30" y2="0"><stop stopColor="#5fb6d6" /><stop offset=".45" stopColor="#5a8bc8" /><stop offset=".6" stopColor="#43288c" /><stop offset="1" stopColor="#7046bd" /></linearGradient></defs><path d="M14 8.500C11.500 12 9.500 12.500 7 12.500a4.300 4.300 0 0 1 0-8.600c3 0 5 2 7.500 4.700s4.500 5.200 7.500 5.200a5.700 5.700 0 0 0 0-11.400C18.500 2.400 16.500 5.500 14 8.500z" stroke="url(#vs)" /></svg>
        </Slot>
        <Slot>
          <svg width="30" height="30" viewBox="0 0 30 30"><rect width="30" height="30" rx="2" fill="#484848" /><path d="M7 10.500L23 5v5.500l-9 3 9 2.500v4.500L7 25v-5l8.500-3L7 14.500z" fill="#ff9800" /></svg>
        </Slot>
        <Slot>
          <svg width="30" height="30" viewBox="0 0 30 30"><path d="M8 5V2h14v3" fill="none" stroke="#36a5df" strokeWidth="2" /><path d="M0 5h30v21a4 4 0 0 1-4 4H4a4 4 0 0 1-4-4z" fill="#f1f1f1" /><path d="M9 12h5.500v5H9z" fill="#f25022" /><path d="M15.500 12H21v5h-5.500z" fill="#7fba00" /><path d="M9 18h5.500v5H9z" fill="#00a4ef" /><path d="M15.500 18H21v5h-5.500z" fill="#ffb900" /></svg>
        </Slot>
        <Slot>
          <svg width="30" height="28" viewBox="0 0 30 28"><path d="M4 1h26v18H4z" fill="#4a8fb8" /><path d="M5 2h24v16H5z" fill="#3fb2f2" /><path d="M5 18V2h24z" fill="#6cc6fa" opacity=".8" /><path d="M11 19l7 8" stroke="#9aa3aa" strokeWidth="3" /><circle cx="6.500" cy="14" r="6" fill="#8fc0dc" stroke="#b3bdc4" /></svg>
        </Slot>
        <Slot active><BraveLion w={26} h={31} /></Slot>
        <div className="flex h-[50px] w-[62.200px] flex-col">
          <div className="flex h-[47px] items-center justify-center pt-[3px]">
            <svg width="30" height="30" viewBox="0 0 30 30" className="mr-[2px]"><path d="M6 1l11-1v27l-17-1V12z" fill="#5f86c9" /><path d="M8 3l-4 20 12 2V3z" fill="#a5c0ea" /><path d="M11 2l18 4v20l-21 2z" fill="#f4f7fc" /><path d="M20 11l7 .5M20 15l7 .5M19 19l8 .5M10 24h16" stroke="#3b63ac" strokeWidth="2" /><text x="9" y="17" fontSize="13" fontWeight="700" textLength="11" lengthAdjust="spacingAndGlyphs" fill="#244a94">W</text></svg>
          </div>
          <div className="flex h-[3px] pl-[5px]"><span className="w-[40px] bg-[#76b1e8]" /><span className="ml-px w-[10px] bg-[#4e7aa6]" /></div>
        </div>
        <Slot running>
          <svg width="30" height="30" viewBox="0 0 30 30"><rect width="30" height="30" rx="3" fill="#e9762b" /><path d="M9 8c-4.500 0-4.500 6-1 7-3.500 1-3.500 7.500 1 7.500 3.500 0 3-5 6-5s2.500 5 6 5c4.500 0 4.500-6.500 1-7.500 3.500-1 3.500-7-1-7-3.500 0-3 4.500-6 4.500S12.500 8 9 8z" fill="none" stroke="#fff" strokeWidth="3.600" strokeLinejoin="round" /></svg>
        </Slot>
        <Slot running>
          <svg width="28" height="24" viewBox="0 0 28 24"><path d="M.5.5h27v22.500H.5z" fill="#050505" stroke="#a9a9a9" /><path d="M1 1h26v2H1z" fill="#d0d0d0" /><path d="M1 3h20q-8 5-20 10z" fill="#333" /><path d="M3 6v3M6 6h2v3M10 6l2 3M13 9h4" stroke="#ddd" fill="none" /></svg>
        </Slot>
      </div>
      <svg width="29" height="30" viewBox="0 0 29 30" className="mb-[2px] ml-[193px]">
        <defs><linearGradient id="sun" x2="0" y2="1"><stop stopColor="#f9b434" /><stop offset="1" stopColor="#f0771c" /></linearGradient></defs>
        <circle cx="13" cy="16" r="13" fill="url(#sun)" /><circle cx="24.500" cy="4.500" r="4" fill="#d1261c" />
        <path d="M14 26a4.500 4.500 0 0 1 0-8 5.500 5.500 0 0 1 9.500-.5 4.500 4.500 0 0 1 1 8.500z" fill="#bdd9f7" />
      </svg>
      <Fit w={37} className="ml-[9px] text-[18.5px]">40°C</Fit>
      <Fit w={105} className="ml-[11px] text-[18.5px]">Mostly sunny</Fit>
      <svg width="140" height="24" viewBox="1581 1043 140 24" className="ml-[30px]" fill="none" stroke="#f4f4f4" strokeWidth="1.500">
        <path d="M1582 1059l8-8 8 8" />
        <circle cx="1620" cy="1055" r="8.200" strokeWidth="1.800" /><circle cx="1620" cy="1055" r="4.200" fill="#fff" stroke="none" />
        <path d="M1647 1050h11.500v10h-14v-4M1660 1053v4M1641 1048v3.500h4V1048M1643 1051.500v5M1641.500 1047v2M1644.500 1047v2" strokeWidth="1.300" />
        <path d="M1673 1062a15 15 0 0 1 15-13" stroke="#aaa" /><path d="M1676.500 1063a12 12 0 0 1 11.500-10" /><path d="M1680 1063.500a9 9 0 0 1 8-7" /><circle cx="1686" cy="1062" r="1.800" fill="#fff" stroke="none" />
        <path d="M1700 1052h3l4-4v14l-4-4h-3z" strokeWidth="1.200" /><path d="M1710 1053q1.500 2 0 4.500" /><path d="M1713 1050q3.500 5 0 10M1716.500 1048q4.500 7 0 14" stroke="#888" strokeWidth="1.200" />
      </svg>
      <div className="ml-[12px] flex w-[29px] flex-col items-center text-[15.5px] leading-[22px]">
        <Fit w={29}>ENG</Fit><Fit w={14}>IN</Fit>
      </div>
      <div className="ml-[16px] flex w-[68px] flex-col items-center text-[15.5px] leading-[22px]">
        <Fit w={52}>4:41 PM</Fit><Fit w={68}>4/21/2023</Fit>
      </div>
      <div className="ml-[23px] flex w-[30px] pt-[2px]">
        <svg width="30" height="32" viewBox="0 0 30 32">
          <path d="M0 1h20v16H7v4l-4-4H0z" fill="#fff" /><path d="M4 5.500h12M4 9h12M4 12.500h8" stroke="#222" strokeWidth="1.300" />
          <circle cx="19.500" cy="20.500" r="9.800" fill="#333" stroke="#8a8a8a" />
          <text x="19.500" y="25.500" fontSize="14" fontWeight="600" fill="#fff" textAnchor="middle">7</text>
        </svg>
      </div>
      <span className="ml-[15px] h-full w-px bg-[#555]" />
    </div>
  );
}

export default function App() {
  return (
    <div className="h-[1080px] w-[1920px] overflow-hidden bg-white">
      <TabBar />
      <Toolbar />
      <ContactPage />
      <Taskbar />
    </div>
  );
}
